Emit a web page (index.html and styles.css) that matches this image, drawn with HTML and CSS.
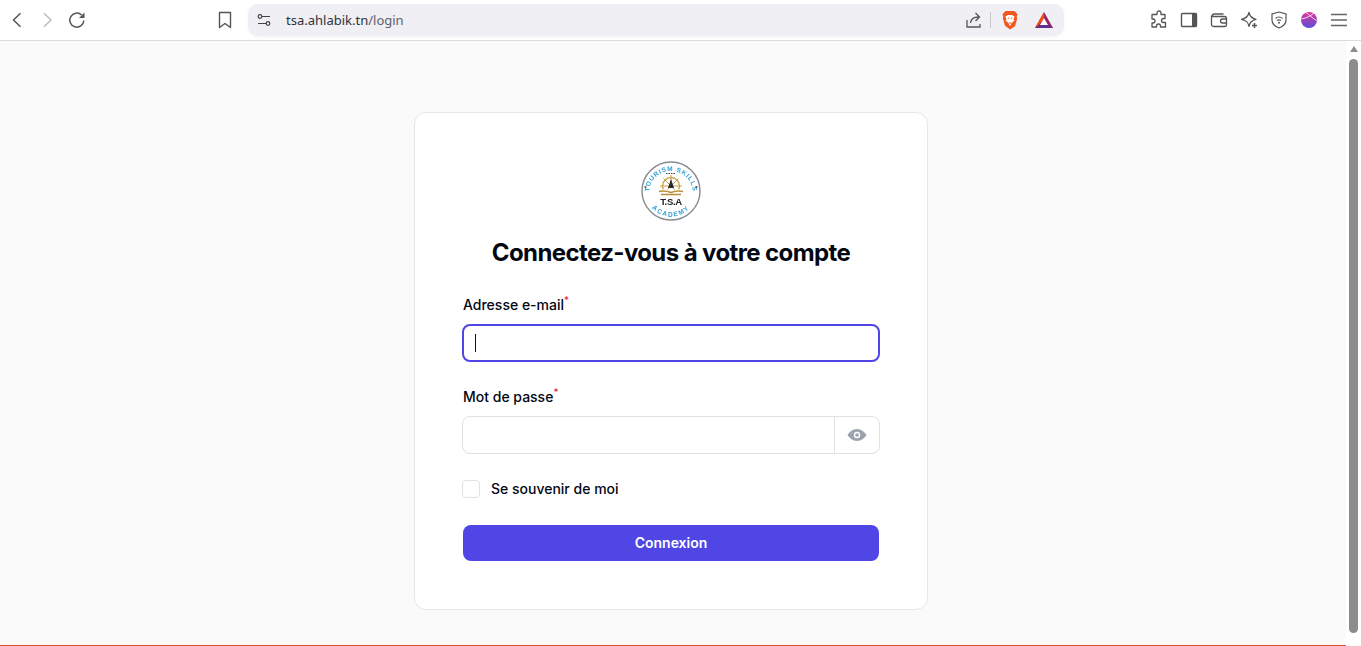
FILE: index.html
```html
<!DOCTYPE html>
<html lang="fr">
<head>
<meta charset="utf-8">
<title>Connexion</title>
<link rel="stylesheet" href="styles.css">
</head>
<body>
<header class="toolbar">
  <div class="nav">
    <svg width="20" height="20" viewBox="0 0 20 20"><path d="M13.500 3.200 6.500 10l7 6.800" fill="none" stroke="#555" stroke-width="1.500"/></svg>
    <svg width="20" height="20" viewBox="0 0 20 20"><path d="M7 3.200 14 10l-7 6.800" fill="none" stroke="#bbb" stroke-width="1.500"/></svg>
    <svg width="20" height="20" viewBox="0 0 20 20"><path d="M16.800 10.500a7 7 0 1 1-2.200-5.500" fill="none" stroke="#555" stroke-width="1.500"/><path d="M17.500 2.500v5.500h-5.500z" fill="#555"/></svg>
  </div>
  <svg class="bookmark" width="16" height="18" viewBox="0 0 16 18"><path d="M2.500 1.500h11v15L8 12.500l-5.500 4z" fill="none" stroke="#555" stroke-width="1.400" stroke-linejoin="round"/></svg>
  <div class="address">
    <svg width="14" height="14" viewBox="0 0 14 14"><g fill="none" stroke="#444" stroke-width="1.200"><circle cx="3" cy="3.500" r="1.800"/><path d="M5 3.500h8M1 10.500h8"/><circle cx="11" cy="10.500" r="1.800"/></g></svg>
    <span class="url">tsa.ahlabik.tn<span class="path">/login</span></span>
    <svg width="18" height="18" viewBox="0 0 18 18"><path d="M2 9v7h13v-3M5.500 12c.5-4 3-6 8-6M10.500 2l4 4-4 4" fill="none" stroke="#555" stroke-width="1.300"/></svg>
    <i class="sep"></i>
    <svg width="18" height="20" viewBox="0 0 18 20"><path d="M4.500 1h9l3 3.200-.8 3 .5 1.500-2.200 7.500L9 19.500l-5-3.800L1.800 8.200l.5-1.500-.8-2.500z" fill="#f1571f"/><path d="M4.500 6.500 7 5h4l2.500 1.500-1 3 1 1-3 2.500-1 2.500H8.500l-1-2.500-3-2.500 1-1z" fill="#fff"/><path d="M6.800 8.200h1.400M9.800 8.200h1.400M8 13h2" stroke="#f1571f" stroke-width="1"/></svg>
    <svg class="bat" width="18" height="16" viewBox="0 0 18 16"><path d="M9 0 0 16h18z" fill="#9e1f63"/><path d="M0 16h18l-3.500-3h-11z" fill="#662d91"/><path d="M9 0 0 16l3.500-3L9 6z" fill="#ff5000"/><path d="M9 6l-4 7h8z" fill="#fff"/></svg>
  </div>
  <div class="tools">
    <svg width="20" height="20" viewBox="0 0 20 20"><path d="M8 3a2 2 0 0 1 4 0v1.500h4v4h-1.500a2 2 0 0 0 0 4H16.500V17h-5v-1a2 2 0 0 0-4 0v1H3v-4h1a2 2 0 0 0 0-4H3V4.500h5z" fill="none" stroke="#555" stroke-width="1.300" stroke-linejoin="round"/></svg>
    <svg width="20" height="20" viewBox="0 0 20 20"><rect x="2.500" y="3.500" width="15" height="13" rx="1" fill="none" stroke="#555" stroke-width="1.400"/><rect x="13" y="3.500" width="4.500" height="13" fill="#555"/></svg>
    <svg width="20" height="20" viewBox="0 0 20 20"><path d="M3 6.500C3 5 4 4 5.500 4h9M2.500 6.500h13a2 2 0 0 1 2 2v6a2 2 0 0 1-2 2h-11a2 2 0 0 1-2-2zM17.500 9h-4a2 2 0 0 0 0 4h4" fill="none" stroke="#555" stroke-width="1.300"/></svg>
    <svg width="20" height="20" viewBox="0 0 20 20"><path d="M10 2.500c.8 4 2.500 5.800 7 6.800-4.500 1-6.200 2.800-7 7-.8-4.200-2.500-6-7.500-7 5-1 6.700-2.800 7.500-6.800z" fill="none" stroke="#555" stroke-width="1.300" stroke-linejoin="round"/><path d="M15.500 13v5M13 15.500h5" stroke="#555" stroke-width="1.500"/></svg>
    <svg width="20" height="20" viewBox="0 0 20 20"><path d="M10 2l7 2v6c0 4-3 6.500-7 8-4-1.500-7-4-7-8V4z" fill="none" stroke="#555" stroke-width="1.200"/><path d="M6.500 8.500c2-1.700 5-1.700 7 0M8 10.500c1.200-.8 2.800-.8 4 0" fill="none" stroke="#555" stroke-width="1.100"/><circle cx="10" cy="12.800" r="1" fill="#555"/></svg>
    <svg width="20" height="20" viewBox="0 0 20 20"><defs><linearGradient id="pf" x1="0" y1="0" x2="0" y2="1"><stop offset="0" stop-color="#e0359a"/><stop offset="1" stop-color="#5a4fd8"/></linearGradient></defs><circle cx="10" cy="10" r="8" fill="url(#pf)"/><path d="M2.500 9c5-1 9-3 12-5.500M7 2.500c3 2 7 6 10.500 8" fill="none" stroke="#fbdcee" stroke-width="1"/></svg>
    <svg width="20" height="20" viewBox="0 0 20 20"><path d="M2 4.500h16M2 10h16M2 15.500h16" stroke="#666" stroke-width="1.500"/></svg>
  </div>
</header>
<div class="viewport">
  <main class="page">
    <section class="card">
      <svg class="logo" width="60" height="60" viewBox="0 0 60 60" role="img" aria-label="Tourism Skills Academy">
        <defs>
          <path id="arcTop" d="M8 32a22 22 0 0 1 44 0"/>
          <path id="arcBottom" d="M4.500 30a25.500 25.500 0 0 0 51 0"/>
        </defs>
        <circle cx="30" cy="30" r="29" fill="#fff" stroke="#858b90" stroke-width="1.400"/>
        <text class="logo-arc"><textPath href="#arcTop" startOffset="50%" text-anchor="middle">TOURISM SKILLS</textPath></text>
        <text class="logo-arc logo-arc-wide"><textPath href="#arcBottom" startOffset="50%" text-anchor="middle">ACADEMY</textPath></text>
        <circle cx="4.500" cy="26" r="1.100" fill="#555"/>
        <circle cx="55.500" cy="26" r="1.100" fill="#555"/>
        <path d="M25 12.500h10" stroke="#444" stroke-width="1.100" stroke-dasharray="1.500 1"/>
        <circle cx="30" cy="25" r="8.500" fill="none" stroke="#c8a24a" stroke-width="1.400"/>
        <path d="M30 14v10M19 25h22M22.500 17.500l15 15M37.500 17.500l-15 15" stroke="#c8a24a" stroke-width="1"/>
        <path d="M30 18l3 9h-6z" fill="#2a2a2a"/>
        <path d="M17 29c5-1.500 9-1 13 1 4-2 8-2.500 13-1v6H17z" fill="#fff"/>
        <path d="M18 30.500c4-1 8-.5 12 1 4-1.500 8-2 12-1M20 33.500h20" fill="none" stroke="#b98f35" stroke-width="1.500"/>
        <text x="30" y="43.500" class="logo-tsa">T.S.A</text>
      </svg>
      <h1 class="title">Connectez-vous à votre compte</h1>
      <form class="form">
        <div class="field">
          <label class="label">Adresse e-mail<sup class="req">*</sup></label>
          <div class="input focus"><i class="caret"></i></div>
        </div>
        <div class="field">
          <label class="label">Mot de passe<sup class="req">*</sup></label>
          <div class="input group">
            <div class="grow"></div>
            <div class="suffix">
              <svg width="20" height="20" viewBox="0 0 20 20"><path fill-rule="evenodd" d="M10 4c4.400 0 8 3.500 9.500 6-1.500 2.500-5.100 6-9.500 6S2 12.500.5 10C2 7.500 5.600 4 10 4zm0 2.800a3.200 3.200 0 1 0 0 6.400 3.200 3.200 0 0 0 0-6.400z" fill="#9ca3af"/><circle cx="10" cy="10" r="1.800" fill="#9ca3af"/></svg>
            </div>
          </div>
        </div>
        <div class="remember"><span class="check"></span><span class="remember-text">Se souvenir de moi</span></div>
        <div class="button">Connexion</div>
      </form>
    </section>
  </main>
  <aside class="scrollbar"><i class="arrow"></i><i class="thumb"></i></aside>
</div>
</body>
</html>
```
FILE: styles.css
```css
* { box-sizing: border-box; }
html, body { margin: 0; height: 100%; overflow: hidden; }
body { font-family: Inter, "Liberation Sans", sans-serif; color: #030712; background: #fafafa; display: flex; flex-direction: column; }
.toolbar { height: 41px; flex: none; background: #fff; border-bottom: 1px solid #dcdcdc; display: flex; align-items: center; padding: 0 9px 1px 7px; }
.nav { display: flex; gap: 10px; width: 203px; }
.bookmark { margin-left: 7px; }
.address { width: 816px; height: 32px; margin-left: 15px; border-radius: 10px; background: #efeff4; display: flex; align-items: center; padding: 0 11px 0 9px; box-shadow: 0 1px 3px rgba(0,0,0,.06); }
.url { font-family: "Noto Sans", "Open Sans", sans-serif; font-size: 13px; color: #30343a; margin-left: 15px; flex: 1; }
.path { color: #5d6168; }
.sep { width: 1px; height: 16px; background: #c8c8cc; margin: 0 10px 0 7px; }
.bat { margin-left: 16px; }
.tools { display: flex; gap: 10px; margin-left: 85px; }
.viewport { flex: 1; min-height: 0; display: flex; }
.page { flex: 1; display: flex; justify-content: center; padding: 71px 4px 0 0; border-bottom: 1px solid #d9503a; }
.card { width: 514px; height: 498px; background: #fff; border: 1px solid #e5e7eb; border-radius: 12px; padding: 48px 47px; display: flex; flex-direction: column; align-items: center; }
.logo { display: block; filter: blur(.25px); }
.logo-arc { font: 700 6.500px "Liberation Sans", sans-serif; fill: #2f9fd6; letter-spacing: .8px; }
.logo-arc-wide { letter-spacing: 1.400px; }
.logo-tsa { font: 700 9.500px "Liberation Sans", sans-serif; fill: #222; text-anchor: middle; letter-spacing: -.3px; }
.title { margin: 16px 0 0; font-size: 24px; line-height: 32px; font-weight: 700; letter-spacing: -.6px; color: #030712; white-space: nowrap; }
.form { width: 100%; margin-top: 24px; display: flex; flex-direction: column; }
.field { display: flex; flex-direction: column; gap: 7px; margin-bottom: 23px; }
.label { font-size: 14px; line-height: 24px; font-weight: 450; height: 24px; padding-left: 1px; }
.req { color: #dc2626; font-size: 10px; line-height: 0; font-weight: 400; vertical-align: 6px; }
.input { height: 38px; background: #fff; border: 1px solid #e0e1e4; border-radius: 8px; }
.input.focus { border: 2px solid #4f46e5; display: flex; align-items: center; padding-left: 11px; }
.caret { width: 1px; height: 18px; background: #111; }
.group { display: flex; }
.grow { flex: 1; }
.suffix { width: 45px; border-left: 1px solid #e0e1e4; display: flex; align-items: center; justify-content: center; }
.remember { display: flex; align-items: center; gap: 11px; height: 22px; margin-top: 1px; }
.check { width: 18px; height: 18px; border: 1px solid #e0e1e4; border-radius: 4px; background: #fff; }
.remember-text { font-size: 14px; font-weight: 450; padding-bottom: 2px; }
.button { margin: 25px 1px 0; height: 36px; padding-bottom: 1px; border-radius: 8px; background: #4f46e5; color: #fff; font-size: 14px; font-weight: 600; display: flex; align-items: center; justify-content: center; }
.scrollbar { width: 15px; flex: none; background: #fff; display: flex; flex-direction: column; align-items: center; padding-top: 5px; gap: 7px; }
.arrow { width: 0; height: 0; border-left: 4px solid transparent; border-right: 4px solid transparent; border-bottom: 6px solid #8c8c8c; }
.thumb { width: 9px; height: 574px; border-radius: 5px; background: #8c8c8c; }
```
